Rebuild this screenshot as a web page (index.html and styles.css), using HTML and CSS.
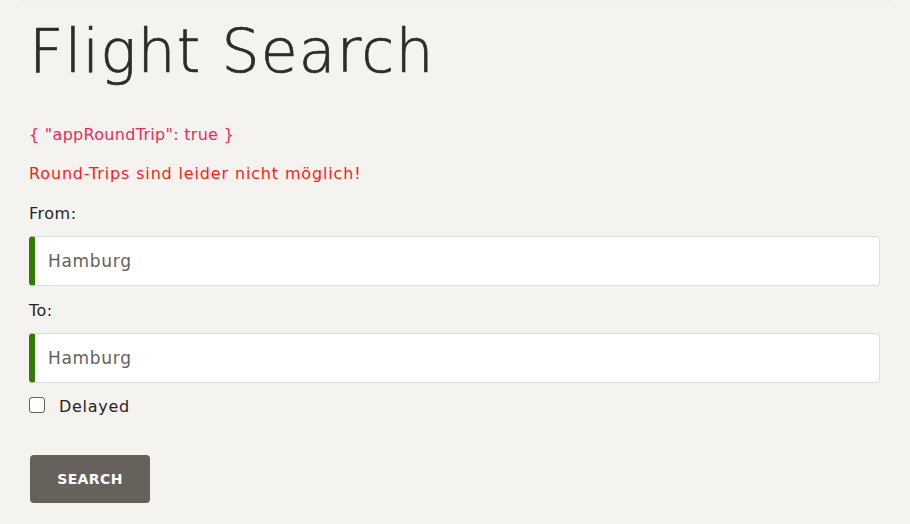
FILE: index.html
```html
<!DOCTYPE html>
<html lang="de">
<head>
<meta charset="utf-8">
<title>Flight Search</title>
<link rel="stylesheet" href="styles.css">
</head>
<body>
<div class="topbar"></div>
<main class="page">
  <h1 class="title">Flight Search</h1>
  <p class="json">{ "appRoundTrip": true }</p>
  <p class="error">Round-Trips sind leider nicht möglich!</p>
  <label class="label label-from">From:</label>
  <input class="field" type="text" value="Hamburg">
  <label class="label label-to">To:</label>
  <input class="field" type="text" value="Hamburg">
  <label class="check-row">
    <span class="checkbox"></span>
    <span class="check-text">Delayed</span>
  </label>
  <button class="btn" type="button">SEARCH</button>
</main>
</body>
</html>
```
FILE: styles.css
```css
html, body {
  margin: 0;
  padding: 0;
  background: #f4f3ef;
  font-family: "DejaVu Sans", sans-serif;
  color: #252422;
}
.topbar {
  height: 1px;
  margin: -1px 20px 0 20px;
  box-shadow: 0 1px 4px rgba(0, 0, 0, 0.08);
}
.page {
  display: flex;
  flex-direction: column;
  align-items: flex-start;
  padding: 0 30px 0 29px;
}
.title {
  margin: 21px 0 0 0;
  font-size: 60px;
  line-height: 60px;
  font-weight: 300;
  letter-spacing: 1.15px;
  color: #2c2c2a;
  -webkit-text-stroke: 0.7px #2c2c2a;
}
.json, .error, .label, .check-text {
  font-size: 16px;
  line-height: 20px;
  margin: 0;
}
.json {
  margin-top: 44px;
  color: #f0285a;
  letter-spacing: 0.3px;
}
.error {
  margin-top: 19px;
  color: #ff1a1a;
  letter-spacing: 0.85px;
}
.label {
  color: #252422;
  letter-spacing: 0.5px;
}
.label-from { margin-top: 19.5px; }
.label-to { margin-top: 15px; }
.field {
  box-sizing: border-box;
  width: 100%;
  height: 50px;
  margin: 12px 0 0 0;
  padding: 0 13px;
  border: 1px solid #dddddd;
  border-left: 6px solid #2f7d05;
  border-radius: 4px;
  background: #ffffff;
  font-family: "DejaVu Sans", sans-serif;
  font-size: 17px;
  letter-spacing: 0.7px;
  color: #66615b;
  outline: none;
}
.check-row {
  display: flex;
  align-items: flex-start;
  margin-top: 14px;
  height: 20px;
}
.checkbox {
  box-sizing: border-box;
  width: 16px;
  height: 16px;
  border: 1px solid #66615b;
  border-radius: 3px;
  background: #ffffff;
}
.check-text {
  margin-left: 14px;
  margin-top: 0.5px;
  letter-spacing: 0.7px;
  color: #252422;
}
.btn {
  margin: 38px 0 0 1px;
  width: 120px;
  height: 48px;
  border: 0;
  border-radius: 4px;
  background: #66615b;
  color: #ffffff;
  font-family: "DejaVu Sans", sans-serif;
  font-weight: 700;
  font-size: 14px;
  letter-spacing: 0.4px;
  padding: 0;
}
```
